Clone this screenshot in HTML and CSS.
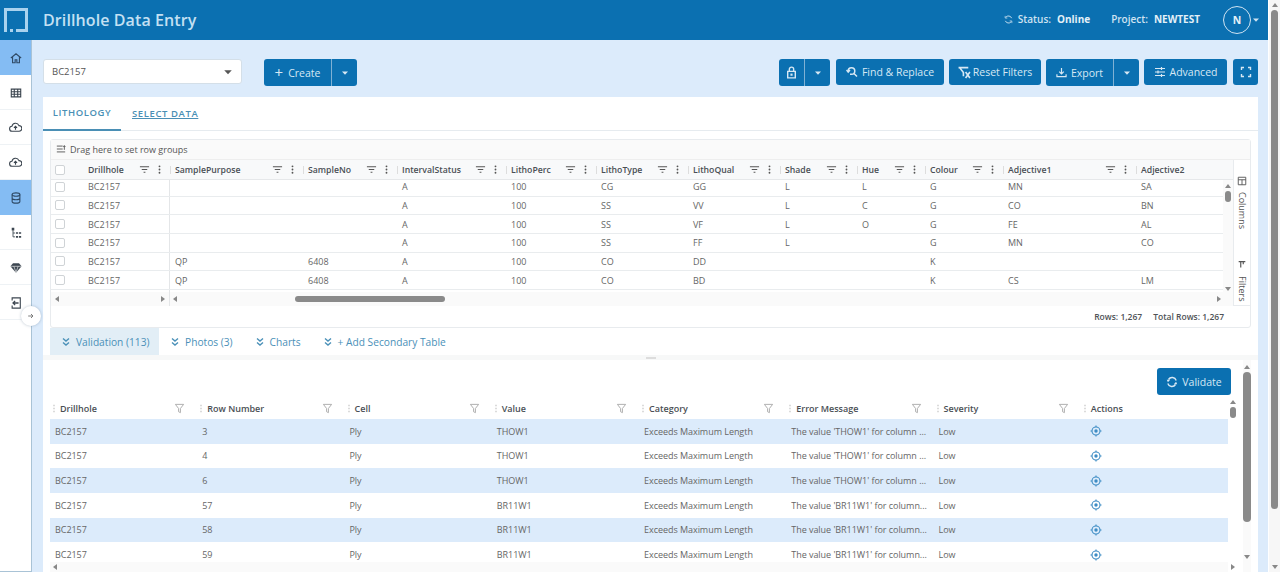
FILE: index.html
```html
<!DOCTYPE html>
<html lang="en">
<head>
<meta charset="utf-8">
<title>Drillhole Data Entry</title>
<link rel="stylesheet" href="styles.css">
</head>
<body>
<svg class="defs" width="0" height="0" aria-hidden="true">
  <symbol id="i-filter" viewBox="0 0 12 12"><path d="M1 3h10M3 6h6M5 9h2" fill="none" stroke="currentColor" stroke-width="1.2"/></symbol>
  <symbol id="i-menu" viewBox="0 0 12 12"><circle cx="6" cy="2.5" r="1" fill="currentColor"/><circle cx="6" cy="6" r="1" fill="currentColor"/><circle cx="6" cy="9.500" r="1" fill="currentColor"/></symbol>
  <symbol id="i-funnel" viewBox="0 0 12 12"><path d="M1.500 1.500h9L7 6v4.500L5 9.500V6z" fill="none" stroke="currentColor" stroke-width="1"/></symbol>
  <symbol id="i-grip" viewBox="0 0 4 12"><path d="M2 1v2M2 5v2M2 9v2" stroke="currentColor" stroke-width="1.400"/></symbol>
  <symbol id="i-target" viewBox="0 0 12 12"><circle cx="6" cy="6" r="4" fill="none" stroke="currentColor" stroke-width="1.100"/><circle cx="6" cy="6" r="1.700" fill="currentColor"/><path d="M6 .5v1.500M6 10v1.500M.5 6H2M10 6h1.500" stroke="currentColor" stroke-width="1.100"/></symbol>
  <symbol id="i-chev" viewBox="0 0 10 10"><path d="M2 1.500l3 2.500 3-2.500M2 5.500l3 2.500 3-2.500" fill="none" stroke="currentColor" stroke-width="1.400"/></symbol>
  <symbol id="i-caret" viewBox="0 0 8 8"><path d="M1 2.500h6L4 5.800z" fill="currentColor"/></symbol>
  <symbol id="i-cloud" viewBox="0 0 14 14"><path d="M3.500 11a2.700 2.700 0 0 1-.3-5.400A3.900 3.900 0 0 1 10.700 5a3 3 0 0 1 .2 6z" fill="none" stroke="currentColor" stroke-width="1.200"/><path d="M7 9.500V6M5.300 7.500L7 5.800l1.700 1.700" fill="none" stroke="currentColor" stroke-width="1.200"/></symbol>
</svg>
<div class="app">
  <div class="page">
    <header class="topbar">
      <svg class="logo" viewBox="0 0 24 24" width="24" height="24"><path d="M1.500 24V1.500h21v21H12" fill="none" stroke="#a9d2ee" stroke-width="3"/><rect x="6" y="21" width="3" height="3" fill="#a9d2ee"/></svg>
      <h1 class="title">Drillhole Data Entry</h1>
      <div class="top-right">
        <svg class="status-icon" viewBox="0 0 10 10" width="9" height="9"><path d="M8.500 3.500A3.800 3.800 0 0 0 2 2.500M1.500 6.500A3.800 3.800 0 0 0 8 7.500" fill="none" stroke="currentColor" stroke-width="1"/><path d="M1.300 1v2.400h2.400M8.700 9V6.600H6.300" fill="none" stroke="currentColor" stroke-width=".8"/></svg>
        <span class="status-label">Status:</span><b class="status-val">Online</b>
        <span class="project-label">Project:</span><b class="project-val">NEWTEST</b>
        <span class="avatar">N</span>
        <svg class="avatar-caret" width="8" height="8"><use href="#i-caret"/></svg>
      </div>
    </header>
    <div class="main">
      <nav class="sidebar">
        <a class="side-item active"><svg viewBox="0 0 14 14" width="12" height="12"><path d="M1 7l6-5 6 5M3 6v6.500h3V9h2v3.500h3V6" fill="none" stroke="currentColor" stroke-width="1.300"/></svg></a>
        <a class="side-item"><svg viewBox="0 0 14 14" width="12" height="12"><path d="M1.500 2.500h11v9h-11zM1.500 5.500h11M1.500 8.500h11M5 2.500v9M9 2.500v9" fill="none" stroke="currentColor" stroke-width="1.300"/></svg></a>
        <a class="side-item"><svg width="13" height="13"><use href="#i-cloud"/></svg></a>
        <a class="side-item"><svg width="13" height="13"><use href="#i-cloud"/></svg></a>
        <a class="side-item active"><svg viewBox="0 0 14 14" width="12" height="12"><ellipse cx="7" cy="3" rx="4.500" ry="2" fill="none" stroke="currentColor" stroke-width="1.300"/><path d="M2.500 3v8c0 1.100 2 2 4.500 2s4.500-.9 4.500-2V3M2.500 7c0 1.100 2 2 4.500 2s4.500-.9 4.500-2" fill="none" stroke="currentColor" stroke-width="1.300"/></svg></a>
        <a class="side-item"><svg viewBox="0 0 14 14" width="12" height="12"><path d="M2 1h3v3H2zM7 6h2.500v2H7zM10.500 6H13v2h-2.500zM7 10.500h2.500v2H7zM10.500 10.500H13v2h-2.500z" fill="currentColor"/><path d="M3.500 4v7.500H6M3.500 7H6" fill="none" stroke="currentColor"/></svg></a>
        <a class="side-item"><svg viewBox="0 0 14 14" width="12" height="12"><path d="M3.500 1.500h7L13.500 5 7 12.500.5 5z" fill="currentColor"/><path d="M.5 5h13M4.500 5L7 12 9.500 5" fill="none" stroke="#fff" stroke-width=".7"/></svg></a>
        <a class="side-item"><svg viewBox="0 0 14 14" width="12" height="12"><path d="M2.500 4V1h9.500v12H2.500v-3" fill="none" stroke="currentColor" stroke-width="1.300"/><path d="M10 7H3.500M6 4.500L3.500 7 6 9.500" fill="none" stroke="currentColor" stroke-width="1.500"/></svg></a>
        <span class="side-toggle"><svg viewBox="0 0 10 10" width="8" height="8"><path d="M1.500 5h6M5 2.500L7.500 5 5 7.500" fill="none" stroke="currentColor" stroke-width="1.200"/></svg></span>
      </nav>
      <div class="content">
        <div class="toolbar">
          <div class="tool-left">
            <div class="select"><span>BC2157</span><svg width="10" height="10" viewBox="0 0 8 8"><use href="#i-caret"/></svg></div>
            <div class="split create"><button class="btn grow"><span class="plus">+</span> Create</button><button class="btn caret"><svg width="8" height="8"><use href="#i-caret"/></svg></button></div>
          </div>
          <div class="tool-right">
            <div class="split lock"><button class="btn grow"><svg viewBox="0 0 12 12" width="13" height="13"><path d="M2.500 5h7v6h-7zM4 5V3a2 2 0 0 1 4 0v2" fill="none" stroke="currentColor" stroke-width="1.300"/><rect x="5" y="7" width="2" height="2" fill="currentColor"/></svg></button><button class="btn caret"><svg width="8" height="8"><use href="#i-caret"/></svg></button></div>
            <button class="btn find"><svg viewBox="0 0 12 12" width="12" height="12"><path d="M2.200 5A3.300 3.300 0 1 1 5.500 8.300H4" fill="none" stroke="currentColor" stroke-width="1.500"/><path d="M8 7.500l3 3M.5 4l1.700 2L4 4" fill="none" stroke="currentColor" stroke-width="1.500"/></svg>Find &amp; Replace</button>
            <button class="btn reset"><svg viewBox="0 0 12 12" width="13" height="13"><path d="M.5 1.500h9M1.500 1.500L5 6v3.500M7 5.500l4 5.500M11 5.500l-4 5.500" fill="none" stroke="currentColor" stroke-width="1.500"/></svg>Reset Filters</button>
            <div class="split export"><button class="btn grow"><svg viewBox="0 0 12 12" width="11" height="11"><path d="M6 1v6.500M3.500 5L6 7.500 8.500 5M1 8v2.500h10V8" fill="none" stroke="currentColor" stroke-width="1.300"/></svg>Export</button><button class="btn caret"><svg width="8" height="8"><use href="#i-caret"/></svg></button></div>
            <button class="btn advanced"><svg viewBox="0 0 12 12" width="12" height="12"><path d="M1 2.500h10M1 6h10M1 9.500h10M7.500 1v3M4 4.500v3M7.500 8v3" fill="none" stroke="currentColor" stroke-width="1.200"/></svg>Advanced</button>
            <button class="btn full"><svg viewBox="0 0 12 12" width="12" height="12"><path d="M1.500 4V1.500H4M8 1.500h2.500V4M10.500 8v2.500H8M4 10.500H1.500V8" fill="none" stroke="currentColor" stroke-width="1.400"/></svg></button>
          </div>
        </div>
        <section class="panel">
          <div class="tabs"><a class="tab on">LITHOLOGY</a><a class="tab link">SELECT DATA</a></div>
          <div class="card">
            <div class="groupbar"><svg viewBox="0 0 12 12" width="10" height="10"><path d="M1 2.500h7M1 6h7M1 9.500h10M10 7V2M8.800 3.500L10 2l1.200 1.500" fill="none" stroke="currentColor" stroke-width="1.100"/></svg>Drag here to set row groups</div>
            <div class="gridmain">
              <div class="gridcols">
                <div class="urow head">
                  <div class="uc chk"><i class="box"></i></div>
                  <div class="hc"><span>Drillhole</span><svg class="hf"><use href="#i-filter"/></svg><svg class="hm"><use href="#i-menu"/></svg></div>
                  <div class="hc sep"><span>SamplePurpose</span><svg class="hf"><use href="#i-filter"/></svg><svg class="hm"><use href="#i-menu"/></svg></div>
                  <div class="hc sep"><span>SampleNo</span><svg class="hf"><use href="#i-filter"/></svg><svg class="hm"><use href="#i-menu"/></svg></div>
                  <div class="hc sep"><span>IntervalStatus</span><svg class="hf"><use href="#i-filter"/></svg><svg class="hm"><use href="#i-menu"/></svg></div>
                  <div class="hc sep"><span>LithoPerc</span><svg class="hf"><use href="#i-filter"/></svg><svg class="hm"><use href="#i-menu"/></svg></div>
                  <div class="hc sep"><span>LithoType</span><svg class="hf"><use href="#i-filter"/></svg><svg class="hm"><use href="#i-menu"/></svg></div>
                  <div class="hc sep"><span>LithoQual</span><svg class="hf"><use href="#i-filter"/></svg><svg class="hm"><use href="#i-menu"/></svg></div>
                  <div class="hc sep"><span>Shade</span><svg class="hf"><use href="#i-filter"/></svg><svg class="hm"><use href="#i-menu"/></svg></div>
                  <div class="hc sep"><span>Hue</span><svg class="hf"><use href="#i-filter"/></svg><svg class="hm"><use href="#i-menu"/></svg></div>
                  <div class="hc sep"><span>Colour</span><svg class="hf"><use href="#i-filter"/></svg><svg class="hm"><use href="#i-menu"/></svg></div>
                  <div class="hc sep"><span>Adjective1</span><svg class="hf"><use href="#i-filter"/></svg><svg class="hm"><use href="#i-menu"/></svg></div>
                  <div class="hc sep"><span>Adjective2</span></div>
                </div>
                <div class="bodywrap">
                  <div class="urows">
                    <div class="urow first"><div class="uc chk"><i class="box"></i></div><div class="uc pin">BC2157</div><div class="uc"></div><div class="uc"></div><div class="uc">A</div><div class="uc">100</div><div class="uc">CG</div><div class="uc">GG</div><div class="uc">L</div><div class="uc">L</div><div class="uc">G</div><div class="uc">MN</div><div class="uc">SA</div></div>
                    <div class="urow"><div class="uc chk"><i class="box"></i></div><div class="uc pin">BC2157</div><div class="uc"></div><div class="uc"></div><div class="uc">A</div><div class="uc">100</div><div class="uc">SS</div><div class="uc">VV</div><div class="uc">L</div><div class="uc">C</div><div class="uc">G</div><div class="uc">CO</div><div class="uc">BN</div></div>
                    <div class="urow"><div class="uc chk"><i class="box"></i></div><div class="uc pin">BC2157</div><div class="uc"></div><div class="uc"></div><div class="uc">A</div><div class="uc">100</div><div class="uc">SS</div><div class="uc">VF</div><div class="uc">L</div><div class="uc">O</div><div class="uc">G</div><div class="uc">FE</div><div class="uc">AL</div></div>
                    <div class="urow"><div class="uc chk"><i class="box"></i></div><div class="uc pin">BC2157</div><div class="uc"></div><div class="uc"></div><div class="uc">A</div><div class="uc">100</div><div class="uc">SS</div><div class="uc">FF</div><div class="uc">L</div><div class="uc"></div><div class="uc">G</div><div class="uc">MN</div><div class="uc">CO</div></div>
                    <div class="urow"><div class="uc chk"><i class="box"></i></div><div class="uc pin">BC2157</div><div class="uc">QP</div><div class="uc">6408</div><div class="uc">A</div><div class="uc">100</div><div class="uc">CO</div><div class="uc">DD</div><div class="uc"></div><div class="uc"></div><div class="uc">K</div><div class="uc"></div><div class="uc"></div></div>
                    <div class="urow"><div class="uc chk"><i class="box"></i></div><div class="uc pin">BC2157</div><div class="uc">QP</div><div class="uc">6408</div><div class="uc">A</div><div class="uc">100</div><div class="uc">CO</div><div class="uc">BD</div><div class="uc"></div><div class="uc"></div><div class="uc">K</div><div class="uc">CS</div><div class="uc">LM</div></div>
                    <div class="urow"><div class="uc chk"><i class="box"></i></div><div class="uc pin"></div></div>
                  </div>
                  <div class="vscroll small"><i class="tri up"></i><i class="thumb t-upper"></i><i class="tri down"></i></div>
                </div>
                <div class="hscroll">
                  <div class="hleft"><i class="tri left"></i><i class="tri right"></i></div>
                  <div class="hright"><i class="tri left"></i><i class="hthumb"></i><i class="tri right"></i></div>
                </div>
              </div>
              <aside class="sidepanel">
                <div class="side-btn"><svg viewBox="0 0 12 12" width="10" height="10"><path d="M1.500 1.500h9v9h-9zM1.500 4.500h9M6 4.500v6" fill="none" stroke="currentColor" stroke-width="1.100"/></svg><span>Columns</span></div>
                <div class="side-btn filters"><svg viewBox="0 0 12 12" width="10" height="10"><path d="M2 2h8M4.500 2v7M7.500 2v3" fill="none" stroke="currentColor" stroke-width="1.400"/></svg><span>Filters</span></div>
              </aside>
            </div>
            <div class="footer"><span>Rows: 1,267</span><span>Total Rows: 1,267</span></div>
          </div>
          <div class="subtabs">
            <a class="subtab on"><svg width="10" height="10"><use href="#i-chev"/></svg>Validation (113)</a>
            <a class="subtab"><svg width="10" height="10"><use href="#i-chev"/></svg>Photos (3)</a>
            <a class="subtab"><svg width="10" height="10"><use href="#i-chev"/></svg>Charts</a>
            <a class="subtab"><svg width="10" height="10"><use href="#i-chev"/></svg>+ Add Secondary Table</a>
          </div>
          <div class="splitter"><i></i></div>
          <div class="lower">
            <div class="lower-main">
              <div class="validate-bar"><button class="btn validate"><svg viewBox="0 0 12 12" width="12" height="12"><path d="M10.200 4.500A4.300 4.300 0 0 0 2.500 3.500M1.800 7.500a4.300 4.300 0 0 0 7.700 1" fill="none" stroke="currentColor" stroke-width="1.400"/><path d="M.8 3.800h3.400L1.900 6.200zM11.200 8.200H7.800l2.300-2.400z" fill="currentColor"/></svg>Validate</button></div>
              <div class="vwrap">
                <div class="vtable">
                  <div class="vrow vhead">
                    <div class="vh"><svg class="grip"><use href="#i-grip"/></svg><span>Drillhole</span><svg class="fun"><use href="#i-funnel"/></svg></div>
                    <div class="vh"><svg class="grip"><use href="#i-grip"/></svg><span>Row Number</span><svg class="fun"><use href="#i-funnel"/></svg></div>
                    <div class="vh"><svg class="grip"><use href="#i-grip"/></svg><span>Cell</span><svg class="fun"><use href="#i-funnel"/></svg></div>
                    <div class="vh"><svg class="grip"><use href="#i-grip"/></svg><span>Value</span><svg class="fun"><use href="#i-funnel"/></svg></div>
                    <div class="vh"><svg class="grip"><use href="#i-grip"/></svg><span>Category</span><svg class="fun"><use href="#i-funnel"/></svg></div>
                    <div class="vh"><svg class="grip"><use href="#i-grip"/></svg><span>Error Message</span><svg class="fun"><use href="#i-funnel"/></svg></div>
                    <div class="vh"><svg class="grip"><use href="#i-grip"/></svg><span>Severity</span><svg class="fun"><use href="#i-funnel"/></svg></div>
                    <div class="vh"><svg class="grip"><use href="#i-grip"/></svg><span>Actions</span></div>
                  </div>
                  <div class="vbody">
                    <div class="vrow alt"><div class="vc">BC2157</div><div class="vc">3</div><div class="vc">Ply</div><div class="vc">THOW1</div><div class="vc">Exceeds Maximum Length</div><div class="vc">The value 'THOW1' for column ...</div><div class="vc">Low</div><div class="vc"><svg class="act"><use href="#i-target"/></svg></div></div>
                    <div class="vrow"><div class="vc">BC2157</div><div class="vc">4</div><div class="vc">Ply</div><div class="vc">THOW1</div><div class="vc">Exceeds Maximum Length</div><div class="vc">The value 'THOW1' for column ...</div><div class="vc">Low</div><div class="vc"><svg class="act"><use href="#i-target"/></svg></div></div>
                    <div class="vrow alt"><div class="vc">BC2157</div><div class="vc">6</div><div class="vc">Ply</div><div class="vc">THOW1</div><div class="vc">Exceeds Maximum Length</div><div class="vc">The value 'THOW1' for column ...</div><div class="vc">Low</div><div class="vc"><svg class="act"><use href="#i-target"/></svg></div></div>
                    <div class="vrow"><div class="vc">BC2157</div><div class="vc">57</div><div class="vc">Ply</div><div class="vc">BR11W1</div><div class="vc">Exceeds Maximum Length</div><div class="vc">The value 'BR11W1' for column...</div><div class="vc">Low</div><div class="vc"><svg class="act"><use href="#i-target"/></svg></div></div>
                    <div class="vrow alt"><div class="vc">BC2157</div><div class="vc">58</div><div class="vc">Ply</div><div class="vc">BR11W1</div><div class="vc">Exceeds Maximum Length</div><div class="vc">The value 'BR11W1' for column...</div><div class="vc">Low</div><div class="vc"><svg class="act"><use href="#i-target"/></svg></div></div>
                    <div class="vrow"><div class="vc">BC2157</div><div class="vc">59</div><div class="vc">Ply</div><div class="vc">BR11W1</div><div class="vc">Exceeds Maximum Length</div><div class="vc">The value 'BR11W1' for column...</div><div class="vc">Low</div><div class="vc"><svg class="act"><use href="#i-target"/></svg></div></div>
                  </div>
                  <div class="vh-scroll"><i class="tri left"></i></div>
                </div>
                <div class="vscroll inner"><i class="tri up"></i><i class="thumb t-inner"></i><i class="tri right"></i></div>
              </div>
            </div>
            <div class="vscroll lower-scroll"><i class="tri up"></i><i class="thumb t-lower"></i><i class="tri down"></i></div>
          </div>
        </section>
      </div>
    </div>
  </div>
  <div class="vscroll page-scroll"><i class="tri up"></i><i class="thumb t-page"></i><i class="tri down"></i></div>
</div>
</body>
</html>
```

FILE: styles.css
```css
* { box-sizing: border-box; }
html, body { margin: 0; height: 100%; overflow: hidden; }
body { font-family: "Open Sans", "Noto Sans", sans-serif; font-size: 9px; color: #555; background: #fff; }
.defs { display: block; height: 0; }
svg { display: block; flex: none; }
.app { display: flex; height: 572px; }
.page { flex: 1; min-width: 0; display: flex; flex-direction: column; }

.topbar { height: 40px; flex: none; background: #0b70b1; display: flex; align-items: center; padding: 0 4px; color: #d5e7f4; }
.logo { margin-right: 15px; }
.title { margin: 0 0 1px; font-size: 16px; font-weight: 600; color: #c4e0f3; letter-spacing: .1px; }
.top-right { margin-left: auto; display: flex; align-items: center; font-size: 10px; font-weight: 600; color: #cfe3f2; }
.top-right b { font-weight: 700; color: #e4f0f8; margin-bottom: 2px; }
.status-icon { margin: 0 5px 2px 0; }
.status-label { margin: 0 6px 2px 0; }
.status-val { margin-right: 21px; }
.project-label { margin: 0 6px 2px 0; }
.project-val { margin-right: 23px; }
.avatar { width: 28px; height: 28px; border-radius: 50%; border: 1.500px solid #cfe3f2; display: flex; align-items: center; justify-content: center; font-size: 10.500px; font-weight: 700; color: #e4f0f8; }
.avatar-caret { margin: 0 4px 0 1px; width: 8px; height: 8px; }

.main { flex: 1; min-height: 0; display: flex; }
.sidebar { width: 32px; flex: none; position: relative; background: #fff; border-right: 1px solid #a9c3d6; border-bottom: 1px solid #a9c3d6; }
.side-item { height: 35px; display: flex; align-items: center; justify-content: center; color: #3c4650; border-bottom: 1px solid #eef2f5; padding-top: 1px; }
.side-item.active { background: #84bcf3; border-bottom-color: #84bcf3; color: #2f4a66; }
.side-toggle { position: absolute; left: 21px; top: 266px; width: 20px; height: 20px; border-radius: 50%; background: #fff; box-shadow: 0 0 3px rgba(60,90,120,.35); display: flex; align-items: center; justify-content: center; color: #777; z-index: 2; }

.content { flex: 1; min-width: 0; background: #dcebfb; padding: 0 10px 0 11px; display: flex; flex-direction: column; }
.toolbar { height: 57px; flex: none; display: flex; justify-content: space-between; align-items: flex-start; padding-top: 19px; }
.tool-left, .tool-right { display: flex; }
.tool-right { gap: 5px; }
.select { width: 199px; height: 25px; background: #fff; border: 1px solid #d4dfe8; border-radius: 3px; display: flex; align-items: center; justify-content: space-between; padding: 0 8px 0 8px; font-size: 9.500px; color: #555; margin-right: 22px; }
.select svg { color: #555; }
.btn { border: 0; background: #0b70b1; color: #d7e8f4; font: inherit; font-size: 10.500px; height: 26px; border-radius: 3px; display: flex; align-items: center; justify-content: center; gap: 4px; padding: 0; }
.split { display: flex; height: 27px; }
.split .btn { height: 100%; }
.split .grow { flex: 1; border-radius: 3px 0 0 3px; border-right: 1px solid #7fb1d4; }
.split .caret { width: 25px; border-radius: 0 3px 3px 0; flex: none; }
.plus { font-size: 15px; line-height: 1; margin-right: 1px; }
.create { width: 93px; }
.lock { width: 51px; margin-right: 1px; }
.export { width: 93px; }
.find { width: 108px; }
.reset { width: 92px; gap: 2px; }
.advanced { width: 83px; }
.full { width: 25px; margin-left: 1px; }

.panel { flex: 1; min-height: 0; background: #fff; display: flex; flex-direction: column; overflow: hidden; }
.tabs { height: 34px; flex: none; display: flex; border-bottom: 1px solid #e6ebef; font-size: 9.500px; font-weight: 600; letter-spacing: .6px; color: #4a8fb5; }
.tab { height: 33px; display: flex; align-items: center; }
.tab.on { width: 78px; height: 34px; padding-bottom: 1px; justify-content: center; border-bottom: 2px solid #4a8fb5; }
.tab.link { margin-left: 11px; text-decoration: underline; }

.card { margin: 8px 7px 0; height: 189px; flex: none; border: 1px solid #e8ebee; border-radius: 3px; display: flex; flex-direction: column; }
.groupbar { height: 20px; flex: none; display: flex; align-items: center; gap: 4px; padding: 0 0 1px 5px; background: #fafafa; border-bottom: 1px solid #eee; color: #555; }
.gridmain { display: flex; height: 146px; flex: none; border-bottom: 1px solid #e8ebee; }
.gridcols { flex: 1; min-width: 0; display: flex; flex-direction: column; }
.urow { display: grid; grid-template-columns: 32px 87px 133px 94px 109px 90px 92px 92px 77px 68px 78px 133px 1fr; height: 18.670px; align-items: center; border-bottom: 1px solid #e9ecee; color: #666; }
.urow.head { height: 20px; flex: none; background: #f8f9fa; border-bottom: 1px solid #e6e8ea; font-weight: 600; font-size: 8.700px; color: #4a4f55; position: relative; z-index: 1; }
.urow.first { margin-top: -2px; }
.uc { padding-left: 5px; height: 100%; display: flex; align-items: center; min-width: 0; white-space: nowrap; }
.uc.chk { padding-left: 4px; }
.uc.pin { border-right: 1px solid #e4e6e8; }
.box { display: block; width: 10px; height: 10px; border: 1px solid #cfd3d6; border-radius: 2px; background: #fff; flex: none; }
.hc { display: flex; align-items: center; height: 100%; padding-left: 5px; padding-right: 5px; min-width: 0; position: relative; white-space: nowrap; }
.hc.sep::before { content: ""; width: 1px; height: 8px; background: #ddd; margin-left: -5px; margin-right: 4px; }
.hc span { flex: 1; min-width: 0; }
.hf { width: 11px; height: 11px; color: #555; margin-right: 4px; }
.hm { width: 11px; height: 11px; color: #555; }
.bodywrap { display: flex; height: 112px; flex: none; }
.urows { flex: 1; min-width: 0; overflow: hidden; }
.vscroll { flex: none; display: flex; flex-direction: column; align-items: center; justify-content: space-between; background: #fafafa; }
.vscroll.small { width: 10px; padding: 4px 0 1px; }
.thumb { display: block; width: 100%; border-radius: 4px; background: #8a8a8a; }
.t-upper { width: 6px; height: 11px; margin-top: 3px; margin-bottom: auto; }
.tri { display: block; width: 0; height: 0; flex: none; border: 3px solid transparent; }
.tri.up { border-top: 0; border-bottom: 4px solid #888; }
.tri.down { border-bottom: 0; border-top: 4px solid #888; }
.tri.left { border-left: 0; border-right: 4px solid #888; }
.tri.right { border-right: 0; border-left: 4px solid #888; }
.hscroll { height: 14px; flex: none; display: flex; background: #fafafa; }
.hleft { width: 119px; flex: none; display: flex; align-items: center; justify-content: space-between; padding: 0 4px; border-right: 1px solid #e4e6e8; }
.hright { flex: 1; display: flex; align-items: center; padding: 0 12px 0 3px; }
.hthumb { display: block; width: 150px; height: 6px; background: #8a8a8a; border-radius: 3px; margin-left: 118px; margin-right: auto; }
.sidepanel { width: 17px; flex: none; border-left: 1px solid #e8ebee; display: flex; flex-direction: column; align-items: center; color: #555; padding-top: 16px; }
.side-btn { display: flex; flex-direction: column; align-items: center; gap: 6px; }
.side-btn span { writing-mode: vertical-rl; line-height: 12px; }
.filters { margin-top: 31px; }
.footer { flex: 1; display: flex; justify-content: flex-end; align-items: center; gap: 11px; padding-right: 26px; font-size: 8.500px; font-weight: 600; color: #4f5357; }

.subtabs { height: 27px; flex: none; margin-left: 7px; display: flex; align-items: stretch; font-size: 10.200px; color: #4a90b8; }
.subtab { display: flex; align-items: center; gap: 5px; padding: 0 11px; }
.subtab.on { background: #e2eef6; width: 109px; padding-right: 0; }
.splitter { height: 5px; flex: none; background: #f7f8f8; display: flex; justify-content: center; align-items: center; }
.splitter i { display: block; width: 10px; height: 2px; background: #ddd; }

.lower { flex: 1; min-height: 0; display: flex; }
.lower-main { flex: 1; min-width: 0; margin-left: 7px; display: flex; flex-direction: column; }
.validate-bar { height: 37px; flex: none; display: flex; justify-content: flex-end; padding: 8px 12px 0 0; }
.validate { width: 74px; height: 27px; gap: 4px; }
.vwrap { flex: 1; min-height: 0; display: flex; }
.vtable { width: 1178px; flex: none; display: flex; flex-direction: column; }
.vrow { display: grid; grid-template-columns: repeat(8, 147.250px); height: 24.670px; align-items: center; }
.vhead { height: 22px; flex: none; font-weight: 600; color: #4a4f55; }
.vbody { height: 143px; flex: none; overflow: hidden; }
.vrow.alt { background: #dcebfb; }
.vh { display: flex; align-items: center; padding-left: 2px; min-width: 0; }
.vh span { flex: 1; }
.grip { width: 4px; height: 9px; color: #bbb; margin-right: 4px; }
.fun { width: 11px; height: 11px; color: #a8a8a8; margin-right: 12px; }
.vc { padding-left: 5px; color: #666; white-space: nowrap; overflow: hidden; display: flex; align-items: center; height: 100%; letter-spacing: -.04px; }
.act { width: 12px; height: 12px; color: #3d8cc4; }
.vc:last-child { padding-left: 9px; }
.vh-scroll { flex: 1; background: #fafafa; display: flex; align-items: center; padding-left: 3px; }
.vscroll.inner { width: 10px; justify-content: flex-start; padding-top: 3px; background: #fff; }
.inner .tri.right { margin-top: auto; margin-bottom: 2px; }
.t-inner { width: 6px; height: 11px; margin-top: 3px; }
.lower-scroll { width: 8px; padding: 5px 0 13px; background: #fafafa; margin-right: 7px; }
.t-lower { width: 100%; height: 150px; margin-top: 3px; margin-bottom: auto; }
.page-scroll { width: 12px; padding: 3px 0 3px; background: #f7f7f7; border-left: 1px solid #fff; }
.t-page { width: 7px; height: 499px; margin-top: 3px; margin-bottom: auto; }
```
